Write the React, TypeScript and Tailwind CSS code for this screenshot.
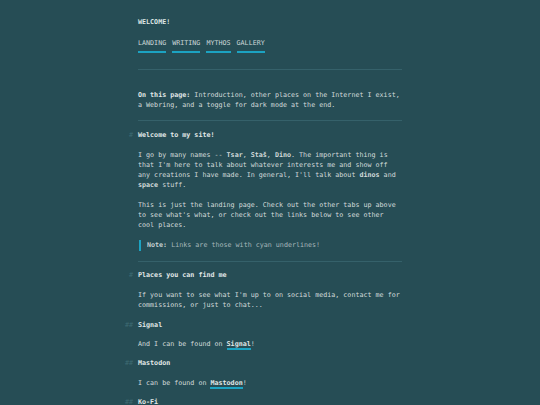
import type { ReactNode } from "react";

const NAV = ["LANDING", "WRITING", "MYTHOS", "GALLERY"];

function Heading({ level, children, className = "" }: { level: 1 | 2; children: ReactNode; className?: string }) {
  return (
    <div className={`relative font-bold text-[#e2e8e8] ${className}`}>
      <span className="absolute right-full mr-[5px] font-normal text-[#3f6b73]">
        {level === 1 ? "#" : "##"}
      </span>
      {children}
    </div>
  );
}

function Link({ children }: { children: ReactNode }) {
  return <span className="font-bold text-[#e2e8e8] border-b-2 border-[#1ca3c2]">{children}</span>;
}

function Rule({ className = "" }: { className?: string }) {
  return <div className={`h-px bg-[#35616a] ${className}`} />;
}

export default function App() {
  return (
    <main
      className="min-h-screen bg-[#264d55] text-[#d3dbdb] text-[6.7px] leading-[10px]"
      style={{ fontFamily: '"DejaVu Sans Mono", "Liberation Mono", monospace' }}
    >
      <div className="mx-auto w-[264px] pt-[16.7px]">
        {/* Header */}
        <div className="font-bold text-[#dfe6e6]">WELCOME!</div>
        <nav className="mt-[11px] flex gap-[6px]">
          {NAV.map((n) => (
            <span key={n} className="inline-block pb-[3px] border-b-2 border-[#1ca3c2] text-[#cfd9da]">
              {n}
            </span>
          ))}
        </nav>
        <Rule className="mt-[16.6px]" />

        <p className="mt-[19.7px]">
          <span className="font-bold text-[#e2e8e8]">On this page:</span> Introduction, other places on the Internet I exist,
          a Webring, and a toggle for dark mode at the end.
        </p>
        <Rule className="mt-[10.2px]" />

        {/* Welcome */}
        <Heading level={1} className="mt-[9.3px]">Welcome to my site!</Heading>
        <p className="mt-[9.5px]">
          I go by many names -- <b>Tsar</b>, <b>Staš</b>, <b>Dino</b>. The important thing is that I'm here to talk
          about whatever interests me and show off any creations I have made. In general, I'll talk about{" "}
          <b>dinos</b> and <b>space</b> stuff.
        </p>
        <p className="mt-[10px]">
          This is just the landing page. Check out the other tabs up above to see what's what, or check out the
          links below to see other cool places.
        </p>
        <div className="mt-[10px] flex items-center gap-[6px]">
          <div className="w-[2px] h-[11px] bg-[#1ca3c2] ml-px" />
          <div className="text-[#a7b8bb]">
            <span className="font-bold text-[#c5d1d3]">Note:</span> Links are those with cyan underlines!
          </div>
        </div>
        <Rule className="mt-[10.5px]" />

        {/* Places */}
        <Heading level={1} className="mt-[8px]">Places you can find me</Heading>
        <p className="mt-[9.7px]">
          If you want to see what I'm up to on social media, contact me for commissions, or just to chat...
        </p>
        <Heading level={2} className="mt-[9.4px]">Signal</Heading>
        <p className="mt-[9.5px]">
          And I can be found on <Link>Signal</Link>!
        </p>
        <Heading level={2} className="mt-[9.3px]">Mastodon</Heading>
        <p className="mt-[9.4px]">
          I can be found on <Link>Mastodon</Link>!
        </p>
        <Heading level={2} className="mt-[9.3px]">Ko-Fi</Heading>
        <p className="mt-[9.5px]">
          Support me on <Link>Ko-Fi</Link>!
        </p>
      </div>
    </main>
  );
}
